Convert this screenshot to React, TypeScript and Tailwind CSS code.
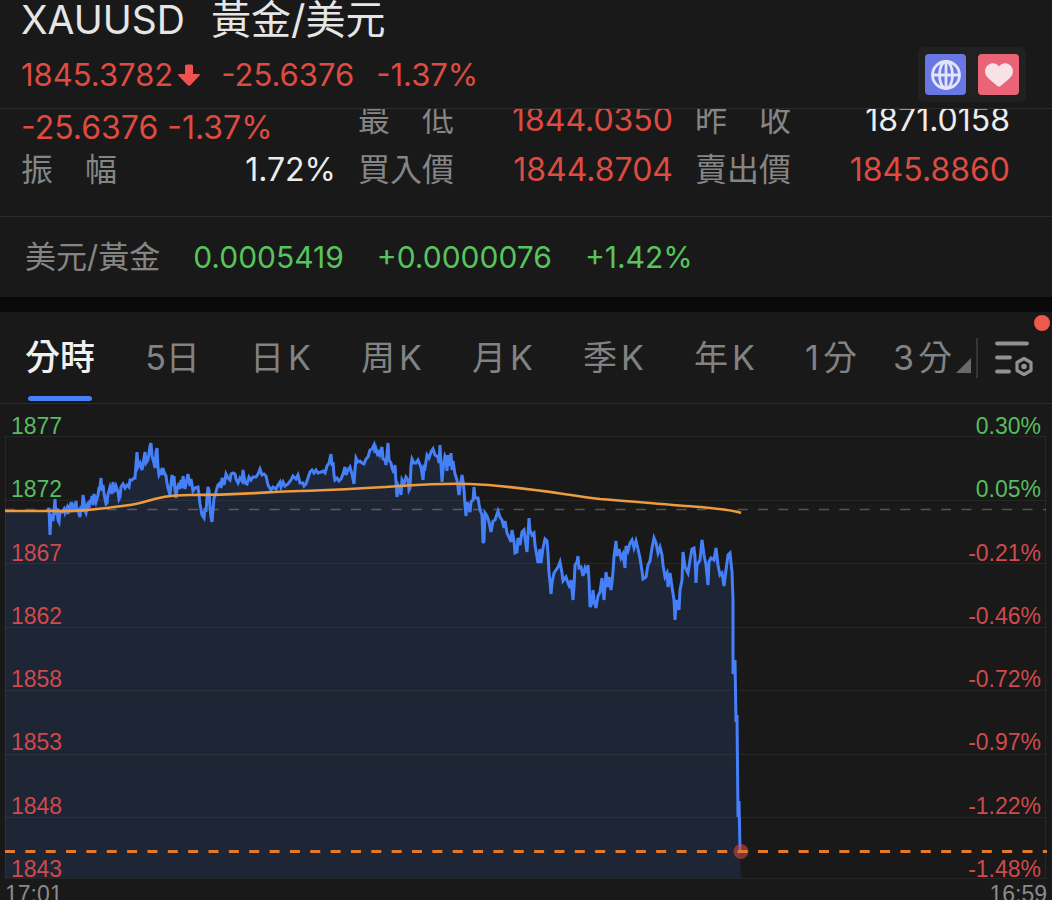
import React from "react";

const PRICE =
  "48,510 49,508 50,535 51,517 52,514 53,521 54,510 55,499 56,515 57,508 58,520 59,522 60,511 62,512 64,509 65,513 67,508 68,514 69,505 70,511 71,502 72,512 73,505 75,508 76,501 77,512 78,508 79,514 80,517 81,506 82,512 83,495 84,501 85,511 86,513 88,502 89,508 90,500 91,503 92,496 93,505 94,494 96,502 98,495 99,488 100,487 101,478 102,491 103,485 104,493 105,499 106,504 107,503 108,494 109,491 110,487 112,494 113,482 114,492 116,486 118,492 119,499 120,497 121,487 123,484 125,488 127,485 129,487 130,480 132,480 134,478 135,478 136,464 137,452 138,467 140,463 142,470 144,458 145,452 146,463 148,460 150,446 151,443 152,456 154,463 155,468 156,452 157,448 158,467 159,475 161,471 162,475 163,468 164,472 166,476 167,483 168,488 170,495 171,484 172,475 173,486 174,476 175,490 176,498 177,489 179,483 180,489 181,480 182,488 183,476 184,482 185,489 186,484 188,474 190,486 191,479 193,491 195,488 198,487 199,495 200,504 202,515 204,518 205,508 206,512 207,497 208,487 209,490 210,508 211,517 212,522 213,510 214,498 215,496 217,488 218,485 220,483 221,488 222,478 224,485 225,480 226,474 228,478 230,480 231,474 233,473 235,474 236,479 238,483 240,478 242,481 243,470 245,483 247,484 249,477 251,480 253,477 256,477 258,474 260,469 262,475 264,474 266,476 268,485 271,490 273,487 276,489 278,485 280,482 281,487 283,482 285,486 288,484 291,480 293,476 296,479 298,475 300,483 303,483 304,486 306,484 308,478 310,472 312,470 314,473 316,470 318,473 321,472 323,471 325,473 327,466 329,463 331,454 332,466 333,462 334,475 335,480 337,478 339,481 341,479 343,474 345,467 346,475 348,470 350,467 352,474 354,484 355,470 356,458 358,462 360,461 362,463 364,464 366,459 368,457 370,450 372,449 374,445 375,453 376,449 378,456 379,450 380,454 382,447 383,459 385,460 386,465 388,443 389,460 391,463 392,468 394,473 395,465 396,482 397,497 398,485 400,489 401,495 402,480 404,484 406,477 408,480 409,490 410,488 411,466 412,459 414,463 416,463 418,460 420,465 421,467 423,480 424,467 425,468 427,455 429,458 431,452 433,449 435,455 438,457 439,463 440,445 441,465 442,482 443,470 445,456 446,458 447,471 448,455 450,466 451,453 452,470 453,461 455,474 457,480 459,495 460,487 462,475 463,481 464,490 465,505 466,516 467,502 470,512 471,502 473,500 474,487 475,498 478,498 480,510 482,515 483,543 484,541 485,513 487,516 489,522 491,532 493,521 495,520 498,511 500,517 502,520 504,528 505,521 507,533 509,537 511,542 512,530 514,541 515,553 517,552 518,538 520,545 522,532 524,530 526,545 527,552 529,518 530,530 532,535 534,533 535,545 537,557 538,563 540,549 541,563 543,548 545,539 547,541 548,553 549,573 550,582 551,594 552,583 554,573 556,570 558,567 560,562 562,573 563,581 566,577 568,583 570,588 571,580 573,600 574,587 575,565 577,562 578,556 579,568 581,567 583,576 585,568 587,573 588,565 589,580 590,607 592,603 593,590 594,600 596,608 598,596 600,592 602,578 603,590 604,600 606,572 608,587 609,577 611,590 612,582 613,572 614,557 616,541 617,556 619,549 621,558 623,554 625,568 626,546 628,551 630,543 632,540 634,548 636,541 638,549 640,558 642,571 643,579 646,577 648,565 650,561 652,548 654,538 656,543 658,553 660,547 662,555 663,565 665,577 667,573 668,587 670,573 672,587 674,600 675,620 676,605 677,600 679,610 680,590 682,580 683,552 685,567 688,573 690,560 692,549 694,548 695,557 696,583 697,565 700,560 702,540 704,555 706,565 708,585 709,562 711,558 714,560 716,548 718,565 720,575 722,573 724,586 726,570 728,555 730,553 732,572 733,600 733,674 735,660 736,722 737,715 738,817 739,801 740,850";

const AVERAGE =
  "M5 511 L50 511 C85 512 105 508 130 505 C152 502 155 495 190 495 C240 495 265 492 300 491 C340 490 370 488 400 486 C430 484 450 483 470 484 C520 486 560 494 600 499 C640 502 670 505 700 507 C720 509 734 510 741 513";

const GRID_LINES = [436, 500, 563, 627, 690, 754, 817, 878];

const LEVELS = [
  { price: "1877", change: "0.30%", up: true },
  { price: "1872", change: "0.05%", up: true },
  { price: "1867", change: "-0.21%", up: false },
  { price: "1862", change: "-0.46%", up: false },
  { price: "1858", change: "-0.72%", up: false },
  { price: "1853", change: "-0.97%", up: false },
  { price: "1848", change: "-1.22%", up: false },
  { price: "1843", change: "-1.48%", up: false },
];

const CANDLE_TABS = ["日", "周", "月", "季", "年"];
const MINUTE_TABS = ["1", "3"];

function Header() {
  return (
    <header className="flex h-[109px] items-end justify-between border-b border-[#2c2c2c] pr-[26px] pl-[21px]">
      <div className="self-start">
        <h1 className="flex gap-[26px] leading-10 whitespace-nowrap text-[#e6e6e6]">
          <span className="text-[39px]">XAUUSD</span>
          <span className="text-[40px]">黃金/美元</span>
        </h1>
        <p className="mt-[15px] flex items-center text-[31px] leading-10 text-[#de4b40]">
          <span>1845.3782</span>
          <svg viewBox="0 0 24 24" className="ml-1 size-6" aria-hidden="true">
            <path
              d="M9.5 1.500h5q1.500 0 1.500 1.500v8h6q1.800 0 .6 1.500l-9 9.500q-1.600 1.600-3.200 0l-9-9.500q-1.200-1.500.6-1.500h6V3q0-1.500 1.500-1.500z"
              fill="#f0524f"
            />
          </svg>
          <span className="ml-5">-25.6376</span>
          <span className="ml-[22px]">-1.37%</span>
        </p>
      </div>
      <div className="mb-[6px] flex gap-3 rounded-md bg-[#212121] p-[7px]">
        <button type="button" aria-label="Market" className="grid size-[41px] place-items-center rounded-[4px] bg-[#6877e3]">
          <svg viewBox="0 0 32 32" className="size-8" fill="none" stroke="#e2e5fb" strokeWidth="2.800" aria-hidden="true">
            <circle cx="16" cy="16" r="13.500" />
            <ellipse cx="16" cy="16" rx="6.500" ry="13.500" />
            <path d="M16 2.500v27M2.500 16h27" />
          </svg>
        </button>
        <button type="button" aria-label="Favourite" className="grid size-[41px] place-items-center rounded-[4px] bg-[#ea6478]">
          <svg viewBox="0 0 30 26" className="h-[26px] w-[30px]" fill="#f8e2e6" aria-hidden="true">
            <path d="M15 4.500C12.500 1 8.500 1 6.500 1.800C1.500 3.500-.5 9.500 2.500 14C4.500 17 10.500 21.500 14 24.300q1 .8 2 0C19.500 21.500 25.500 17 27.500 14C30.500 9.500 28.500 3.500 23.500 1.800C21.500 1 17.500 1 15 4.500z" />
          </svg>
        </button>
      </div>
    </header>
  );
}

function Stat({ label, value, red }: { label: string; value: string; red?: boolean }) {
  return (
    <div className="flex items-center justify-between">
      <dt className="flex w-24 justify-between text-[#858585]">
        {label.split(" ").map((part) => (
          <span key={part}>{part}</span>
        ))}
      </dt>
      <dd className={red ? "text-[#de4b40]" : "text-[#ececec]"}>{value}</dd>
    </div>
  );
}

function Stats() {
  return (
    <section className="h-[108px] overflow-hidden border-b border-[#2c2c2c]">
      <div className="-mt-[14px] grid grid-cols-3 gap-x-[22px] pr-[42px] pl-[21px] text-[32px] leading-[50px] whitespace-nowrap">
        <p className="h-[50px] pt-2 text-[#de4b40]">-25.6376 -1.37%</p>
        <dl className="contents">
          <Stat label="最 低" value="1844.0350" red />
          <Stat label="昨 收" value="1871.0158" />
          <Stat label="振 幅" value="1.72%" />
          <Stat label="買入價" value="1844.8704" red />
          <Stat label="賣出價" value="1845.8860" red />
        </dl>
      </div>
    </section>
  );
}

function InversePair() {
  return (
    <section className="flex h-20 items-center gap-[33px] pl-[25px] text-[30px] leading-10 whitespace-nowrap text-[#57c45c]">
      <span className="text-[31px] text-[#858585]">美元/黃金</span>
      <span>0.0005419</span>
      <span>+0.0000076</span>
      <span>+1.42%</span>
    </section>
  );
}

function PeriodTabs() {
  return (
    <nav className="relative flex h-[92px] items-center border-b border-[#2c2c2c] pl-[25px] text-[34px] whitespace-nowrap text-[#828282]">
      <div className="flex h-full flex-1 justify-between">
        <button type="button" className="relative text-[35px] font-medium text-[#f0f0f0]">
          分時
          <span className="absolute inset-x-[3px] bottom-[2px] h-[5px] rounded-sm bg-[#4880fa]" />
        </button>
        <button type="button">5日</button>
        {CANDLE_TABS.map((unit) => (
          <button type="button" key={unit} className="flex items-center gap-1">
            <span>{unit}</span>
            <span>K</span>
          </button>
        ))}
        <div className="flex gap-9">
          {MINUTE_TABS.map((count) => (
            <button type="button" key={count} className="flex items-center gap-1">
              <span>{count}</span>
              <span>分</span>
            </button>
          ))}
        </div>
      </div>
      <svg viewBox="0 0 16 16" className="mt-4 ml-1 size-4" aria-hidden="true">
        <path d="M15 0v15H0z" fill="#696969" />
      </svg>
      <span className="ml-1 h-10 w-[2px] bg-[#353535]" />
      <button type="button" aria-label="Chart settings" className="mr-[18px] ml-4">
        <svg viewBox="0 0 40 40" className="size-10" fill="none" stroke="#929292" strokeWidth="3.800" strokeLinecap="round" aria-hidden="true">
          <path d="M3 5.500h30M3 19.500h13M3 33.500h12" />
          <path d="M30 20.500l7 4v8l-7 4l-7-4v-8z" strokeWidth="3.200" strokeLinejoin="round" />
          <circle cx="30" cy="28.500" r="2.800" fill="#929292" stroke="none" />
        </svg>
      </button>
      <span className="absolute top-[3px] right-[2px] size-4 rounded-full bg-[#ee594c]" />
    </nav>
  );
}

function Chart() {
  return (
    <section className="relative h-[480px] font-['Liberation_Sans',Arial,sans-serif] text-[23px] leading-6">
      <svg viewBox="0 404 1052 480" preserveAspectRatio="none" className="block h-full w-full" role="img" aria-label="XAUUSD 分時">
        <path d={`M5 511L48 511L${PRICE} L741 878L5 878Z`} fill="#1e2534" />
        <g stroke="#ffffff" strokeOpacity="0.06" strokeWidth="1">
          {GRID_LINES.map((y) => (
            <path key={y} d={`M5 ${y}.5H1046`} />
          ))}
          <path d="M5.500 436V878M1045.500 436V878" />
        </g>
        <path d="M5 509.500H1046" stroke="#ffffff" strokeOpacity="0.26" strokeWidth="1.500" strokeDasharray="10 10.350" />
        <polyline points={PRICE} fill="none" stroke="#4680f8" strokeWidth="3" />
        <path d={AVERAGE} fill="none" stroke="#ec9b3e" strokeWidth="2.600" />
        <circle cx="741" cy="851.500" r="7.500" fill="#d94b48" fillOpacity="0.550" />
        <path d="M5 851.500H1047" stroke="#e27a2d" strokeWidth="3" strokeDasharray="10 10.350" />
      </svg>
      <div className="absolute inset-x-[11px] top-[10px] bottom-[3px] flex flex-col justify-between">
        {LEVELS.map((level) => (
          <div
            key={level.price}
            className={level.up ? "flex justify-between text-[#57bd5e]" : "flex justify-between text-[#cf4a4c]"}
          >
            <span>{level.price}</span>
            <span>{level.change}</span>
          </div>
        ))}
      </div>
    </section>
  );
}

export default function App() {
  return (
    <main className="h-screen overflow-hidden bg-[#191919] font-[Inter,'Noto_Sans_CJK_TC',sans-serif] font-normal">
      <Header />
      <Stats />
      <InversePair />
      <div className="h-[15px] bg-[#090909]" />
      <PeriodTabs />
      <Chart />
      <div className="flex justify-between px-[5px] font-['Liberation_Sans',Arial,sans-serif] text-[23px] leading-5 text-[#8a8a8a]">
        <span>17:01</span>
        <span>16:59</span>
      </div>
    </main>
  );
}
